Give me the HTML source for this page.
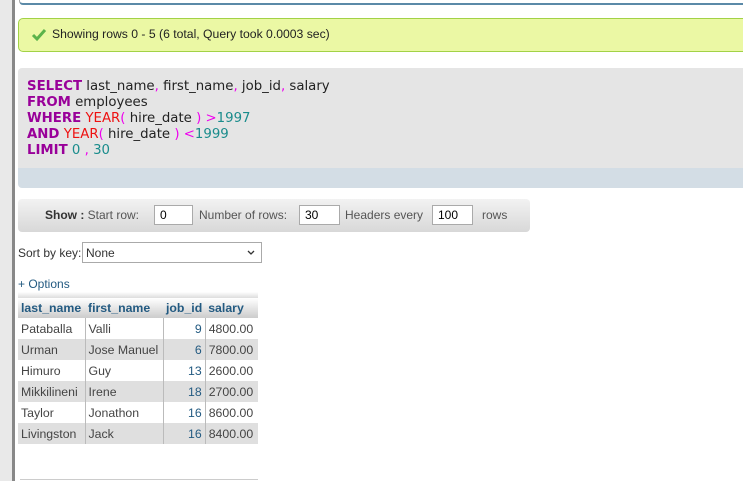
<!DOCTYPE html><html><head><style>
body{margin:0;width:743px;height:481px;overflow:hidden;background:#fff;font-family:"Liberation Sans",sans-serif;font-size:12px;color:#333;position:relative}
.a{position:absolute}
.sql{font-family:"DejaVu Sans",sans-serif;font-size:13.3px;line-height:16px;color:#222}
.k{color:#909;font-weight:bold}.f{color:#e11}.n{color:#1a8c8c}.p{color:#e0e}
td,th{padding:0 3px;height:21px;font-size:12.3px;white-space:nowrap}
th{color:#235a81;font-weight:bold;text-align:left;background:linear-gradient(#fff,#ccc);height:20px}
table{border-collapse:collapse}
tr.o td{background:#fff}tr.e td{background:#dfdfdf}
td{border-right:1px solid #bbb;color:#444}
.r{text-align:right;color:#235a81}
input.i{position:absolute;height:20px;border:1px solid #aaa;box-sizing:border-box;font:12px "Liberation Sans",sans-serif;padding:0 5px;background:#fff}
</style></head><body>
<div class="a" style="left:0;top:0;width:12px;height:481px;background:#e9e9e9"></div>
<div class="a" style="left:12px;top:0;width:3px;height:481px;background:#888"></div>
<div class="a" style="left:19px;top:0;width:730px;height:3px;border:1px solid #aaa;border-top:0;border-bottom:2px solid #5b8aa8;border-radius:0 0 0 4px"></div>
<div class="a" style="left:18px;top:18px;width:740px;height:32px;background:#ebf8a4;border:1px solid #a2d246;border-radius:5px"></div>
<svg class="a" style="left:31px;top:28px" width="16" height="14" viewBox="0 0 16 14"><path d="M2 7l4 4 8-9" stroke="#5bb34a" stroke-width="3" fill="none"/></svg>
<div class="a" style="left:52px;top:27px;font-size:12.2px;color:#222">Showing rows 0 - 5 (6 total, Query took 0.0003 sec)</div>
<div class="a" style="left:18px;top:68px;width:740px;height:100px;background:#e5e5e5;border-radius:4px 0 0 0"></div>
<div class="a" style="left:18px;top:168px;width:740px;height:20px;background:#d3dde5;border-radius:0 0 0 4px"></div>
<div class="a sql" style="left:27px;top:79px">
<div><span class="k">SELECT</span> last_name<span class="p">,</span> first_name<span class="p">,</span> job_id<span class="p">,</span> salary</div>
<div><span class="k">FROM</span> employees</div>
<div><span class="k">WHERE</span> <span class="f">YEAR</span><span class="p">(</span> hire_date <span class="p">)</span> <span class="p">&gt;</span><span class="n">1997</span></div>
<div><span class="k">AND</span> <span class="f">YEAR</span><span class="p">(</span> hire_date <span class="p">)</span> <span class="p">&lt;</span><span class="n">1999</span></div>
<div><span class="k">LIMIT</span> <span class="n">0</span> <span class="p">,</span> <span class="n">30</span></div>
</div>
<div class="a" style="left:18px;top:199px;width:512px;height:33px;background:linear-gradient(#f2f2f2,#d8d8d8);border-radius:4px"></div>
<div class="a" style="left:45px;top:208px;font-size:12px"><b style="color:#333">Show :</b> <span style="color:#555">Start row:</span></div>
<input class="i" style="left:154px;top:205px;width:39px" value="0">
<div class="a" style="left:199px;top:208px;color:#555">Number of rows:</div>
<input class="i" style="left:299px;top:205px;width:41px" value="30">
<div class="a" style="left:345px;top:208px;color:#555">Headers every</div>
<input class="i" style="left:432px;top:205px;width:41px" value="100">
<div class="a" style="left:482px;top:208px;color:#555">rows</div>
<div class="a" style="left:18px;top:246px;color:#333">Sort by key:</div>
<div class="a" style="left:82px;top:242px;width:180px;height:21px;border:1px solid #aaa;box-sizing:border-box;padding:3px 3px;color:#333">None<svg style="position:absolute;right:6px;top:7px" width="8" height="5" viewBox="0 0 8 5"><path d="M1 1l3 3 3-3" stroke="#333" stroke-width="1.3" fill="none"/></svg></div>
<div class="a" style="left:18px;top:277px;color:#235a81">+ Options</div>
<div class="a" style="left:18px;top:292px;width:240px;height:6px;background:linear-gradient(#fff,#ddd)"></div>
<table class="a" style="left:18px;top:298px">
<tr><th style="width:61px">last_name</th><th style="width:72px">first_name</th><th style="width:36px">job_id</th><th style="width:47px">salary</th></tr>
<tr class="o"><td>Pataballa</td><td>Valli</td><td class="r">9</td><td style="border:0">4800.00</td></tr>
<tr class="e"><td>Urman</td><td>Jose Manuel</td><td class="r">6</td><td style="border:0">7800.00</td></tr>
<tr class="o"><td>Himuro</td><td>Guy</td><td class="r">13</td><td style="border:0">2600.00</td></tr>
<tr class="e"><td>Mikkilineni</td><td>Irene</td><td class="r">18</td><td style="border:0">2700.00</td></tr>
<tr class="o"><td>Taylor</td><td>Jonathon</td><td class="r">16</td><td style="border:0">8600.00</td></tr>
<tr class="e"><td>Livingston</td><td>Jack</td><td class="r">16</td><td style="border:0">8400.00</td></tr>
</table>
<div class="a" style="left:20px;top:479px;width:238px;height:1px;background:#ccc"></div>
</body></html>
